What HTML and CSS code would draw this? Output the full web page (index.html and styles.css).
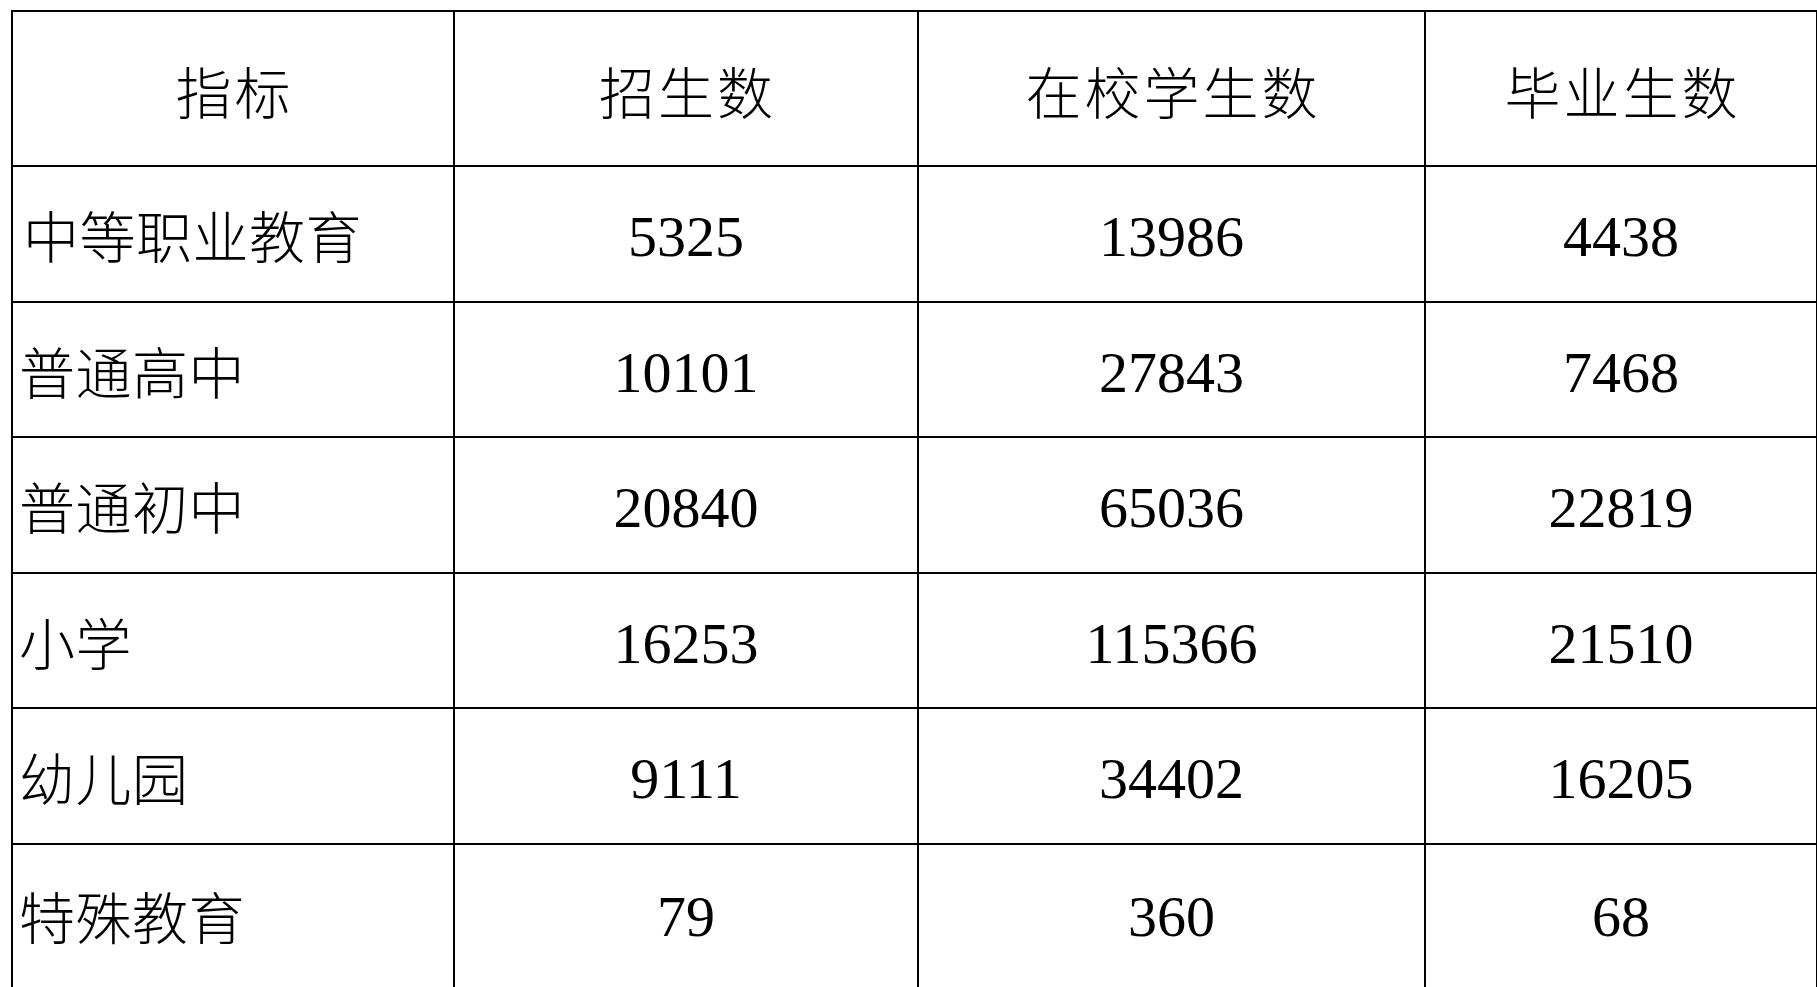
FILE: index.html
```html
<!DOCTYPE html>
<html lang="zh-CN">
<head>
<meta charset="utf-8">
<title>教育统计</title>
<link rel="stylesheet" href="styles.css">
</head>
<body>
<table class="stats">
  <colgroup>
    <col class="c1">
    <col class="c2">
    <col class="c3">
    <col class="c4">
  </colgroup>
  <thead>
    <tr class="head">
      <th>指标</th>
      <th>招生数</th>
      <th>在校学生数</th>
      <th>毕业生数</th>
    </tr>
  </thead>
  <tbody>
    <tr><td class="label lw">中等职业教育</td><td>5325</td><td>13986</td><td>4438</td></tr>
    <tr><td class="label">普通高中</td><td>10101</td><td>27843</td><td>7468</td></tr>
    <tr><td class="label">普通初中</td><td>20840</td><td>65036</td><td>22819</td></tr>
    <tr><td class="label">小学</td><td>16253</td><td>115366</td><td>21510</td></tr>
    <tr><td class="label">幼儿园</td><td>9111</td><td>34402</td><td>16205</td></tr>
    <tr class="last"><td class="label">特殊教育</td><td>79</td><td>360</td><td>68</td></tr>
  </tbody>
</table>
</body>
</html>
```
FILE: styles.css
```css
html, body {
  margin: 0;
  padding: 0;
  background: #fff;
  overflow: hidden;
}

body {
  padding: 10px 0 0 11px;
}

.stats {
  border-collapse: collapse;
  table-layout: fixed;
  width: 1806px;
  color: #000;
}

.c1 { width: 442px; }
.c2 { width: 464px; }
.c3 { width: 507px; }
.c4 { width: 392px; }

.stats th,
.stats td {
  border: 2px solid #000;
  padding: 0;
  text-align: center;
  vertical-align: middle;
  font-family: "Liberation Serif", "Times New Roman", serif;
  font-size: 58px;
  font-weight: normal;
}

.stats td {
  padding-top: 6px;
}

.stats th {
  font-family: "Noto Sans CJK SC", sans-serif;
  font-weight: 300;
  font-size: 56px;
  letter-spacing: 3px;
  height: 151px;
  padding-left: 3px;
  padding-top: 2px;
}

.stats tbody tr {
  height: 135.5px;
}

.stats tbody tr.last {
  height: 160px;
}

.stats tbody tr.last td {
  vertical-align: top;
  padding-top: 38px;
}

.stats td.label {
  text-align: left;
  font-family: "Noto Sans CJK SC", sans-serif;
  font-weight: 300;
  font-size: 56px;
  letter-spacing: 0.5px;
  padding-left: 6px;
  padding-top: 0;
}

.stats tbody tr.last td.label {
  padding-top: 29px;
}

.stats td.lw {
  padding-left: 10px;
}
```
